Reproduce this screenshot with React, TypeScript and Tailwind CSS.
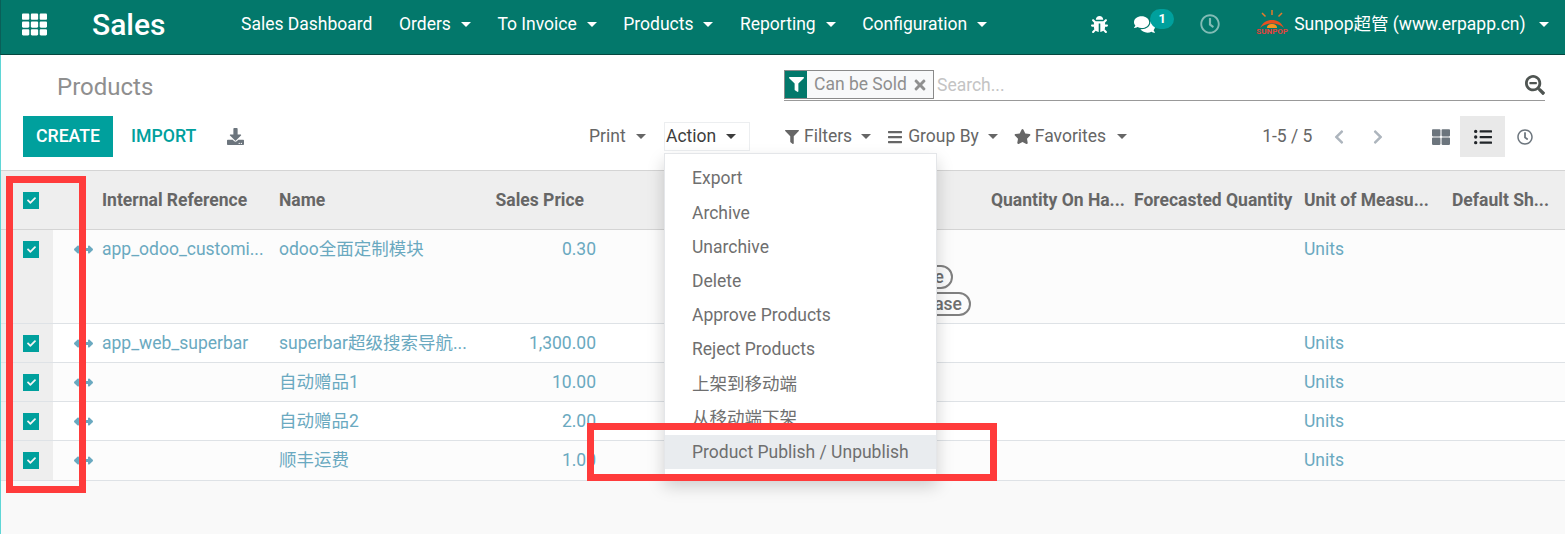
import React from 'react';
import {
  FaTh,
  FaBug,
  FaComments,
  FaRegClock,
  FaFilter,
  FaTimes,
  FaSearchMinus,
  FaDownload,
  FaBars,
  FaStar,
  FaChevronLeft,
  FaChevronRight,
  FaThLarge,
  FaListUl,
  FaCheck,
  FaArrowsAltH,
} from 'react-icons/fa';

const menuItems = ['Sales Dashboard', 'Orders', 'To Invoice', 'Products', 'Reporting', 'Configuration'];

const actions = [
  'Export',
  'Archive',
  'Unarchive',
  'Delete',
  'Approve Products',
  'Reject Products',
  '上架到移动端',
  '从移动端下架',
  'Product Publish / Unpublish',
];

const rows = [
  { ref: 'app_odoo_customi...', name: 'odoo全面定制模块', price: '0.30', height: 'h-[94px]', bg: 'bg-[#fcfcfc]', tags: true },
  { ref: 'app_web_superbar', name: 'superbar超级搜索导航...', price: '1,300.00', height: 'h-[39px]', bg: 'bg-white', tags: false },
  { ref: '', name: '自动赠品1', price: '10.00', height: 'h-[39px]', bg: 'bg-[#fcfcfc]', tags: false },
  { ref: '', name: '自动赠品2', price: '2.00', height: 'h-[39px]', bg: 'bg-white', tags: false },
  { ref: '', name: '顺丰运费', price: '1.00', height: 'h-[40px]', bg: 'bg-[#fcfcfc]', tags: false },
];

const gridCols = 'grid-cols-[52px_43px_176px_208px_123px_381px_143px_170px_148px_119px]';

const Caret = ({ className = '' }: { className?: string }) => (
  <span className={`inline-block w-0 h-0 border-x-[5.5px] border-x-transparent border-t-[5.5px] border-t-current ${className}`} />
);

const Check = () => (
  <span className="w-4 h-[17px] bg-[#00a09d] flex items-center justify-center text-[#f4f4f4]">
    <FaCheck className="w-[9px] h-[9px]" />
  </span>
);

const SunpopLogo = () => (
  <div className="w-[28px] h-[25px] mb-[3px] flex flex-col items-center">
    <svg viewBox="0 0 28 19" className="w-[28px] h-[19px] shrink-0">
      <path d="M14 0v5M4 3l3.500 3.500M24 3l-3.500 3.500" stroke="#e8792b" strokeWidth="1.5" fill="none" />
      <path d="M2 18C5 12 9 10 14 10s9 2 12 8c-3-3-7-4.500-12-4.500S5 15 2 18z" fill="#e8501f" />
      <path d="M9 18c0-3 2-4 5-4s5 1 5 4z" fill="#f7931e" />
    </svg>
    <span className="text-[8px] leading-[6px] font-bold text-[#e8403a] whitespace-nowrap">SUNPOP</span>
  </div>
);

const App: React.FC = () => {
  return (
    <div className="relative h-[534px] w-[1565px] overflow-hidden bg-[#f9f9f9] text-[17.5px] text-[#666666] font-['Roboto','Noto_Sans_CJK_SC',sans-serif]">
      <nav className="h-[55px] pb-[6px] bg-[#03786b] border-b border-[#04473f] border-l border-l-[#0a5f58] flex items-center text-white">
        <FaTh className="ml-[21px] w-[25px] h-[25px]" />
        <span className="ml-[45px] w-[149px] text-[30px] font-medium">Sales</span>
        <div className="flex items-center gap-[26.500px]">
          {menuItems.map((item, i) => (
            <span key={item} className="flex items-center gap-[10px]">
              {item}
              {i > 0 && <Caret />}
            </span>
          ))}
        </div>
        <FaBug className="ml-[104px] w-[17px] h-[17px]" />
        <span className="relative ml-[26px] w-[41px]">
          <FaComments className="w-[21px] h-[21px]" />
          <span className="absolute left-[16px] -top-[5px] w-[24px] h-[20px] rounded-full bg-[#00a09d] text-[13px] font-bold flex items-center justify-center">1</span>
        </span>
        <FaRegClock className="ml-[25px] w-[20px] h-[20px] opacity-50" />
        <div className="ml-[38px]">
          <SunpopLogo />
        </div>
        <span className="ml-[8px]">Sunpop超管 (www.erpapp.cn)</span>
        <Caret className="ml-[13px]" />
      </nav>

      <div className="border-l border-[#5fd6d6] h-[479px]">
        <section className="h-[115px] bg-white">
          <div className="h-[61px] flex">
            <h1 className="w-[783px] pl-[56px] pt-[16px] text-[24px] leading-[32px] text-[#8f8f8f]">Products</h1>
            <div className="w-[761px] h-[31px] mt-[15px] border-b border-[#999999] flex items-start">
              <div className="h-[29px] w-[150px] border border-[#8a8a8a] bg-[#f8f9fa] flex items-center">
                <span className="w-[22px] h-full bg-[#03786b] text-white flex items-center justify-center">
                  <FaFilter className="w-[15px] h-[15px]" />
                </span>
                <span className="ml-[7px] text-[#8f8f8f]">Can be Sold</span>
                <FaTimes className="ml-[5px] w-[16px] h-[16px] text-[#8f8f8f]" />
              </div>
              <span className="ml-[3px] mt-[2px] text-[#c4c4c4]">Search...</span>
              <FaSearchMinus className="ml-auto mt-[5px] w-[20px] h-[20px] text-[#4f5552]" />
            </div>
          </div>
          <div className="flex items-center h-[41px]">
            <button className="ml-[22px] w-[90px] h-[41px] pb-[1px] bg-[#00a09d] text-white font-medium text-[17.7px]">CREATE</button>
            <span className="ml-[18px] w-[96px] pb-[1px] text-[#00a09d] font-medium text-[17.7px]">IMPORT</span>
            <FaDownload className="w-[17px] h-[17px] text-[#6c757d]" />
            <div className="ml-[345px] w-[75px] flex items-center gap-[10px]">
              Print
              <Caret />
            </div>
            <div className="w-[86px] h-[29px] border border-[#eceef0] flex items-center gap-[10px] pl-[1px] text-[#3d3d3d]">
              Action
              <Caret />
            </div>
            <div className="ml-[35px] flex items-center text-[#666666]">
              <FaFilter className="w-[14px] h-[14px] mr-[5px]" />
              Filters
              <Caret className="ml-[9px]" />
              <FaBars className="ml-[16px] mr-[5px] w-[16px] h-[16px]" />
              Group By
              <Caret className="ml-[9px]" />
              <FaStar className="ml-[16px] mr-[4px] w-[17px] h-[17px]" />
              Favorites
              <Caret className="ml-[11px]" />
            </div>
            <span className="ml-[135px] text-[#666666]">1-5 / 5</span>
            <FaChevronLeft className="ml-[20px] w-[14px] h-[16px] text-[#adb5bd]" />
            <FaChevronRight className="ml-[25px] w-[14px] h-[16px] text-[#adb5bd]" />
            <FaThLarge className="ml-[47px] w-[18px] h-[18px] text-[#6c757d]" />
            <span className="ml-[10px] w-[45px] h-[41px] bg-[#e9e9e9] flex items-center justify-center text-[#212529]">
              <FaListUl className="w-[18px] h-[18px]" />
            </span>
            <FaRegClock className="ml-[12px] w-[16px] h-[16px] text-[#6c757d]" />
          </div>
        </section>

        <div className={`grid ${gridCols} h-[60px] bg-[#eeeeee] border-y border-[#d4d4d4] font-bold text-[#666666] items-center`}>
          <div className="pl-[22px]">
            <Check />
          </div>
          <div />
          <div className="pl-[6px]">Internal Reference</div>
          <div className="pl-[7px]">Name</div>
          <div className="text-right pr-[19px]">Sales Price</div>
          <div />
          <div className="pl-[7px] whitespace-nowrap">Quantity On Ha...</div>
          <div className="pl-[7px] whitespace-nowrap">Forecasted Quantity</div>
          <div className="pl-[7px] whitespace-nowrap">Unit of Measu...</div>
          <div className="pl-[7px] whitespace-nowrap">Default Sh...</div>
        </div>

        {rows.map((row) => (
          <div key={row.name} className={`grid ${gridCols} ${row.height} ${row.bg} border-b border-[#dee2e6] text-[#6aa9c0]`}>
            <div className="bg-[#eeeeee] pl-[22px] pt-[11px]">
              <Check />
            </div>
            <div className="pl-[21px] pt-[10px]">
              <FaArrowsAltH className="w-[19px] h-[19px]" />
            </div>
            <div className="pl-[6px] pt-[6px] whitespace-nowrap">{row.ref}</div>
            <div className="pl-[7px] pt-[6px] whitespace-nowrap">{row.name}</div>
            <div className="text-right pr-[7px] pt-[6px]">{row.price}</div>
            <div className="pt-[35px]">
              {row.tags && (
                <div className="flex flex-col items-end text-[#6f6f6f] font-medium">
                  <span className="h-[24px] px-[7px] mr-[31px] flex items-center rounded-full border-2 border-[#808080]">Sale</span>
                  <span className="h-[24px] px-[7px] mr-[13px] mt-[3px] flex items-center rounded-full border-2 border-[#808080]">Release</span>
                </div>
              )}
            </div>
            <div />
            <div />
            <div className="pl-[7px] pt-[6px]">Units</div>
            <div />
          </div>
        ))}
      </div>

      {/* open Action dropdown */}
      <div className="absolute left-[664px] top-[153px] w-[273px] pt-[7.5px] pb-[8px] bg-white border border-[#e4e6e9] shadow-[0_8px_16px_rgba(0,0,0,0.18)]">
        {actions.map((label, i) => (
          <div key={label} className={`h-[34.2px] pl-[27px] flex items-center text-[#6f6f6f] ${i === actions.length - 1 ? 'bg-[#e9ecef]' : ''}`}>
            {label}
          </div>
        ))}
      </div>

      {/* red annotations drawn on the screenshot */}
      <div className="absolute left-[6px] top-[176px] w-[80px] h-[317px] border-[7px] border-[#ff3b3b]" />
      <div className="absolute left-[587px] top-[423px] w-[410px] h-[58px] border-[7px] border-[#ff3b3b]" />
    </div>
  );
};

export default App;
